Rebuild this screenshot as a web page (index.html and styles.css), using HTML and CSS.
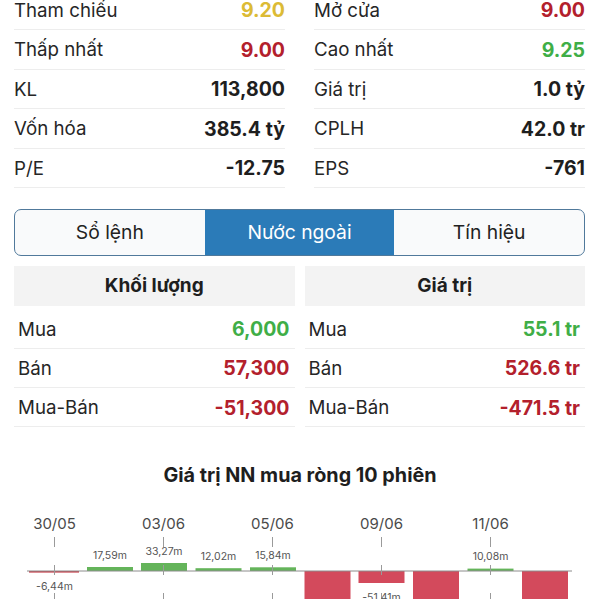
FILE: index.html
```html
<!DOCTYPE html>
<html lang="vi">
<head>
<meta charset="utf-8">
<title>Chi tiết cổ phiếu</title>
<link rel="stylesheet" href="styles.css">
</head>
<body>
<div class="page">
  <div class="inner">
    <div class="stats">
      <div class="col">
        <div class="row"><span class="lbl">Tham chiếu</span><span class="val ref">9.20</span></div>
        <div class="row"><span class="lbl">Thấp nhất</span><span class="val down">9.00</span></div>
        <div class="row"><span class="lbl">KL</span><span class="val">113,800</span></div>
        <div class="row"><span class="lbl">Vốn hóa</span><span class="val">385.4 tỷ</span></div>
        <div class="row"><span class="lbl">P/E</span><span class="val">-12.75</span></div>
      </div>
      <div class="col">
        <div class="row"><span class="lbl">Mở cửa</span><span class="val down">9.00</span></div>
        <div class="row"><span class="lbl">Cao nhất</span><span class="val up">9.25</span></div>
        <div class="row"><span class="lbl">Giá trị</span><span class="val">1.0 tỷ</span></div>
        <div class="row"><span class="lbl">CPLH</span><span class="val">42.0 tr</span></div>
        <div class="row"><span class="lbl">EPS</span><span class="val">-761</span></div>
      </div>
    </div>

    <div class="tabs">
      <div class="tab">Sổ lệnh</div>
      <div class="tab active">Nước ngoài</div>
      <div class="tab">Tín hiệu</div>
    </div>

    <div class="nn">
      <div class="panel">
        <div class="phead">Khối lượng</div>
        <div class="prows">
          <div class="prow"><span class="lbl">Mua</span><span class="val up">6,000</span></div>
          <div class="prow"><span class="lbl">Bán</span><span class="val down">57,300</span></div>
          <div class="prow"><span class="lbl">Mua-Bán</span><span class="val down">-51,300</span></div>
        </div>
      </div>
      <div class="panel">
        <div class="phead">Giá trị</div>
        <div class="prows">
          <div class="prow"><span class="lbl">Mua</span><span class="val up">55.1 tr</span></div>
          <div class="prow"><span class="lbl">Bán</span><span class="val down">526.6 tr</span></div>
          <div class="prow"><span class="lbl">Mua-Bán</span><span class="val down">-471.5 tr</span></div>
        </div>
      </div>
    </div>
  </div>

  <h2 class="chart-title">Giá trị NN mua ròng 10 phiên</h2>

  <svg class="chart" viewBox="0 487 600 113" width="600" height="113">
    <g class="dates">
      <text x="54.5" y="530">30/05</text>
      <text x="163.5" y="530">03/06</text>
      <text x="272.5" y="530">05/06</text>
      <text x="381.5" y="530">09/06</text>
      <text x="490.5" y="530">11/06</text>
    </g>
    <g class="bars">
      <rect class="neg" x="29" y="572" width="50" height="1.6"/>
      <rect class="pos" x="87" y="568" width="46" height="4"/>
      <rect class="pos" x="141" y="564" width="46" height="8"/>
      <rect class="pos" x="195.5" y="569.2" width="46" height="2.8"/>
      <rect class="pos" x="250" y="568.3" width="46" height="3.7"/>
      <rect class="neg big" x="304.5" y="572" width="46" height="40"/>
      <rect class="neg big" x="358.5" y="572" width="46" height="12"/>
      <rect class="neg big" x="413" y="572" width="46" height="40"/>
      <rect class="pos" x="467.5" y="569.6" width="46" height="2.4"/>
      <rect class="neg big" x="522" y="572" width="46" height="40"/>
    </g>
    <line class="axis" x1="27" y1="572" x2="572" y2="572"/>
    <g class="ticks">
      <line x1="54.5" y1="538" x2="54.5" y2="610"/>
      <line x1="163.5" y1="538" x2="163.5" y2="610"/>
      <line x1="272.5" y1="538" x2="272.5" y2="610"/>
      <line x1="381.5" y1="538" x2="381.5" y2="610"/>
      <line x1="490.5" y1="538" x2="490.5" y2="610"/>
    </g>
    <g class="vals">
      <text x="54.5" y="591">-6,44m</text>
      <text x="110" y="560">17,59m</text>
      <text x="164" y="556">33,27m</text>
      <text x="218.5" y="561">12,02m</text>
      <text x="273" y="560">15,84m</text>
      <text x="381.5" y="602">-51,41m</text>
      <text x="490.5" y="561">10,08m</text>
    </g>
  </svg>
</div>
</body>
</html>
```
FILE: styles.css
```css
* { box-sizing: border-box; }
html, body { margin: 0; padding: 0; background: #fff; }
body {
  font-family: Inter, "Noto Sans", "Liberation Sans", sans-serif;
  color: #222;
  overflow: hidden;
}
.page { width: 600px; height: 600px; overflow: hidden; }
.inner { padding: 0 15px 0 14px; }

.stats {
  display: grid;
  grid-template-columns: 1fr 1fr;
  column-gap: 29px;
  margin-top: -9.5px;
}
.row, .prow {
  display: flex;
  justify-content: space-between;
  align-items: center;
  height: 39.5px;
  border-bottom: 1px solid #ededed;
  padding-top: 1px;
}
.lbl { font-size: 18.7px; font-weight: 400; color: #262626; }
.val { font-size: 19.5px; font-weight: 700; color: #1e1e1e; }
.val.ref { color: #dcbb35; }
.val.down { color: #b3202c; }
.val.up { color: #3fae47; }

.tabs {
  display: flex;
  margin-top: 20.5px;
  height: 47px;
  border: 1.5px solid #50799b;
  border-radius: 7px;
  overflow: hidden;
  background: #f9fafb;
}
.tab {
  flex: 1;
  display: flex;
  align-items: center;
  justify-content: center;
  font-size: 19.3px;
  color: #222;
}
.tab.active { background: #2b7bb8; color: #fff; }

.nn {
  display: grid;
  grid-template-columns: 1fr 1fr;
  column-gap: 10px;
  margin-top: 10px;
}
.phead {
  height: 40px;
  background: #f3f3f3;
  display: flex;
  align-items: center;
  justify-content: center;
  font-size: 19px;
  font-weight: 700;
  color: #1e1e1e;
}
.prows { margin-top: 4px; }
.prow { padding: 1px 5px 0 4px; height: 39.3px; }

.chart-title {
  margin: 36.5px 0 0;
  font-size: 19.8px;
  font-weight: 700;
  line-height: 22px;
  text-align: center;
  color: #1e1e1e;
}
.chart { display: block; }
.dates text {
  font-family: Inter, "Noto Sans", sans-serif;
  font-size: 15px;
  fill: #4a4a4a;
  text-anchor: middle;
}
.vals text {
  font-family: Inter, "Noto Sans", sans-serif;
  font-size: 10.5px;
  fill: #555;
  text-anchor: middle;
}
.pos { fill: #64b45a; }
.neg { fill: #c9434f; }
.neg.big { fill: #d34a5c; }
.axis { stroke: #8c8c8c; stroke-width: 1; }
.ticks line { stroke: #9a9a9a; stroke-width: 1; stroke-dasharray: 10 18; }
```
